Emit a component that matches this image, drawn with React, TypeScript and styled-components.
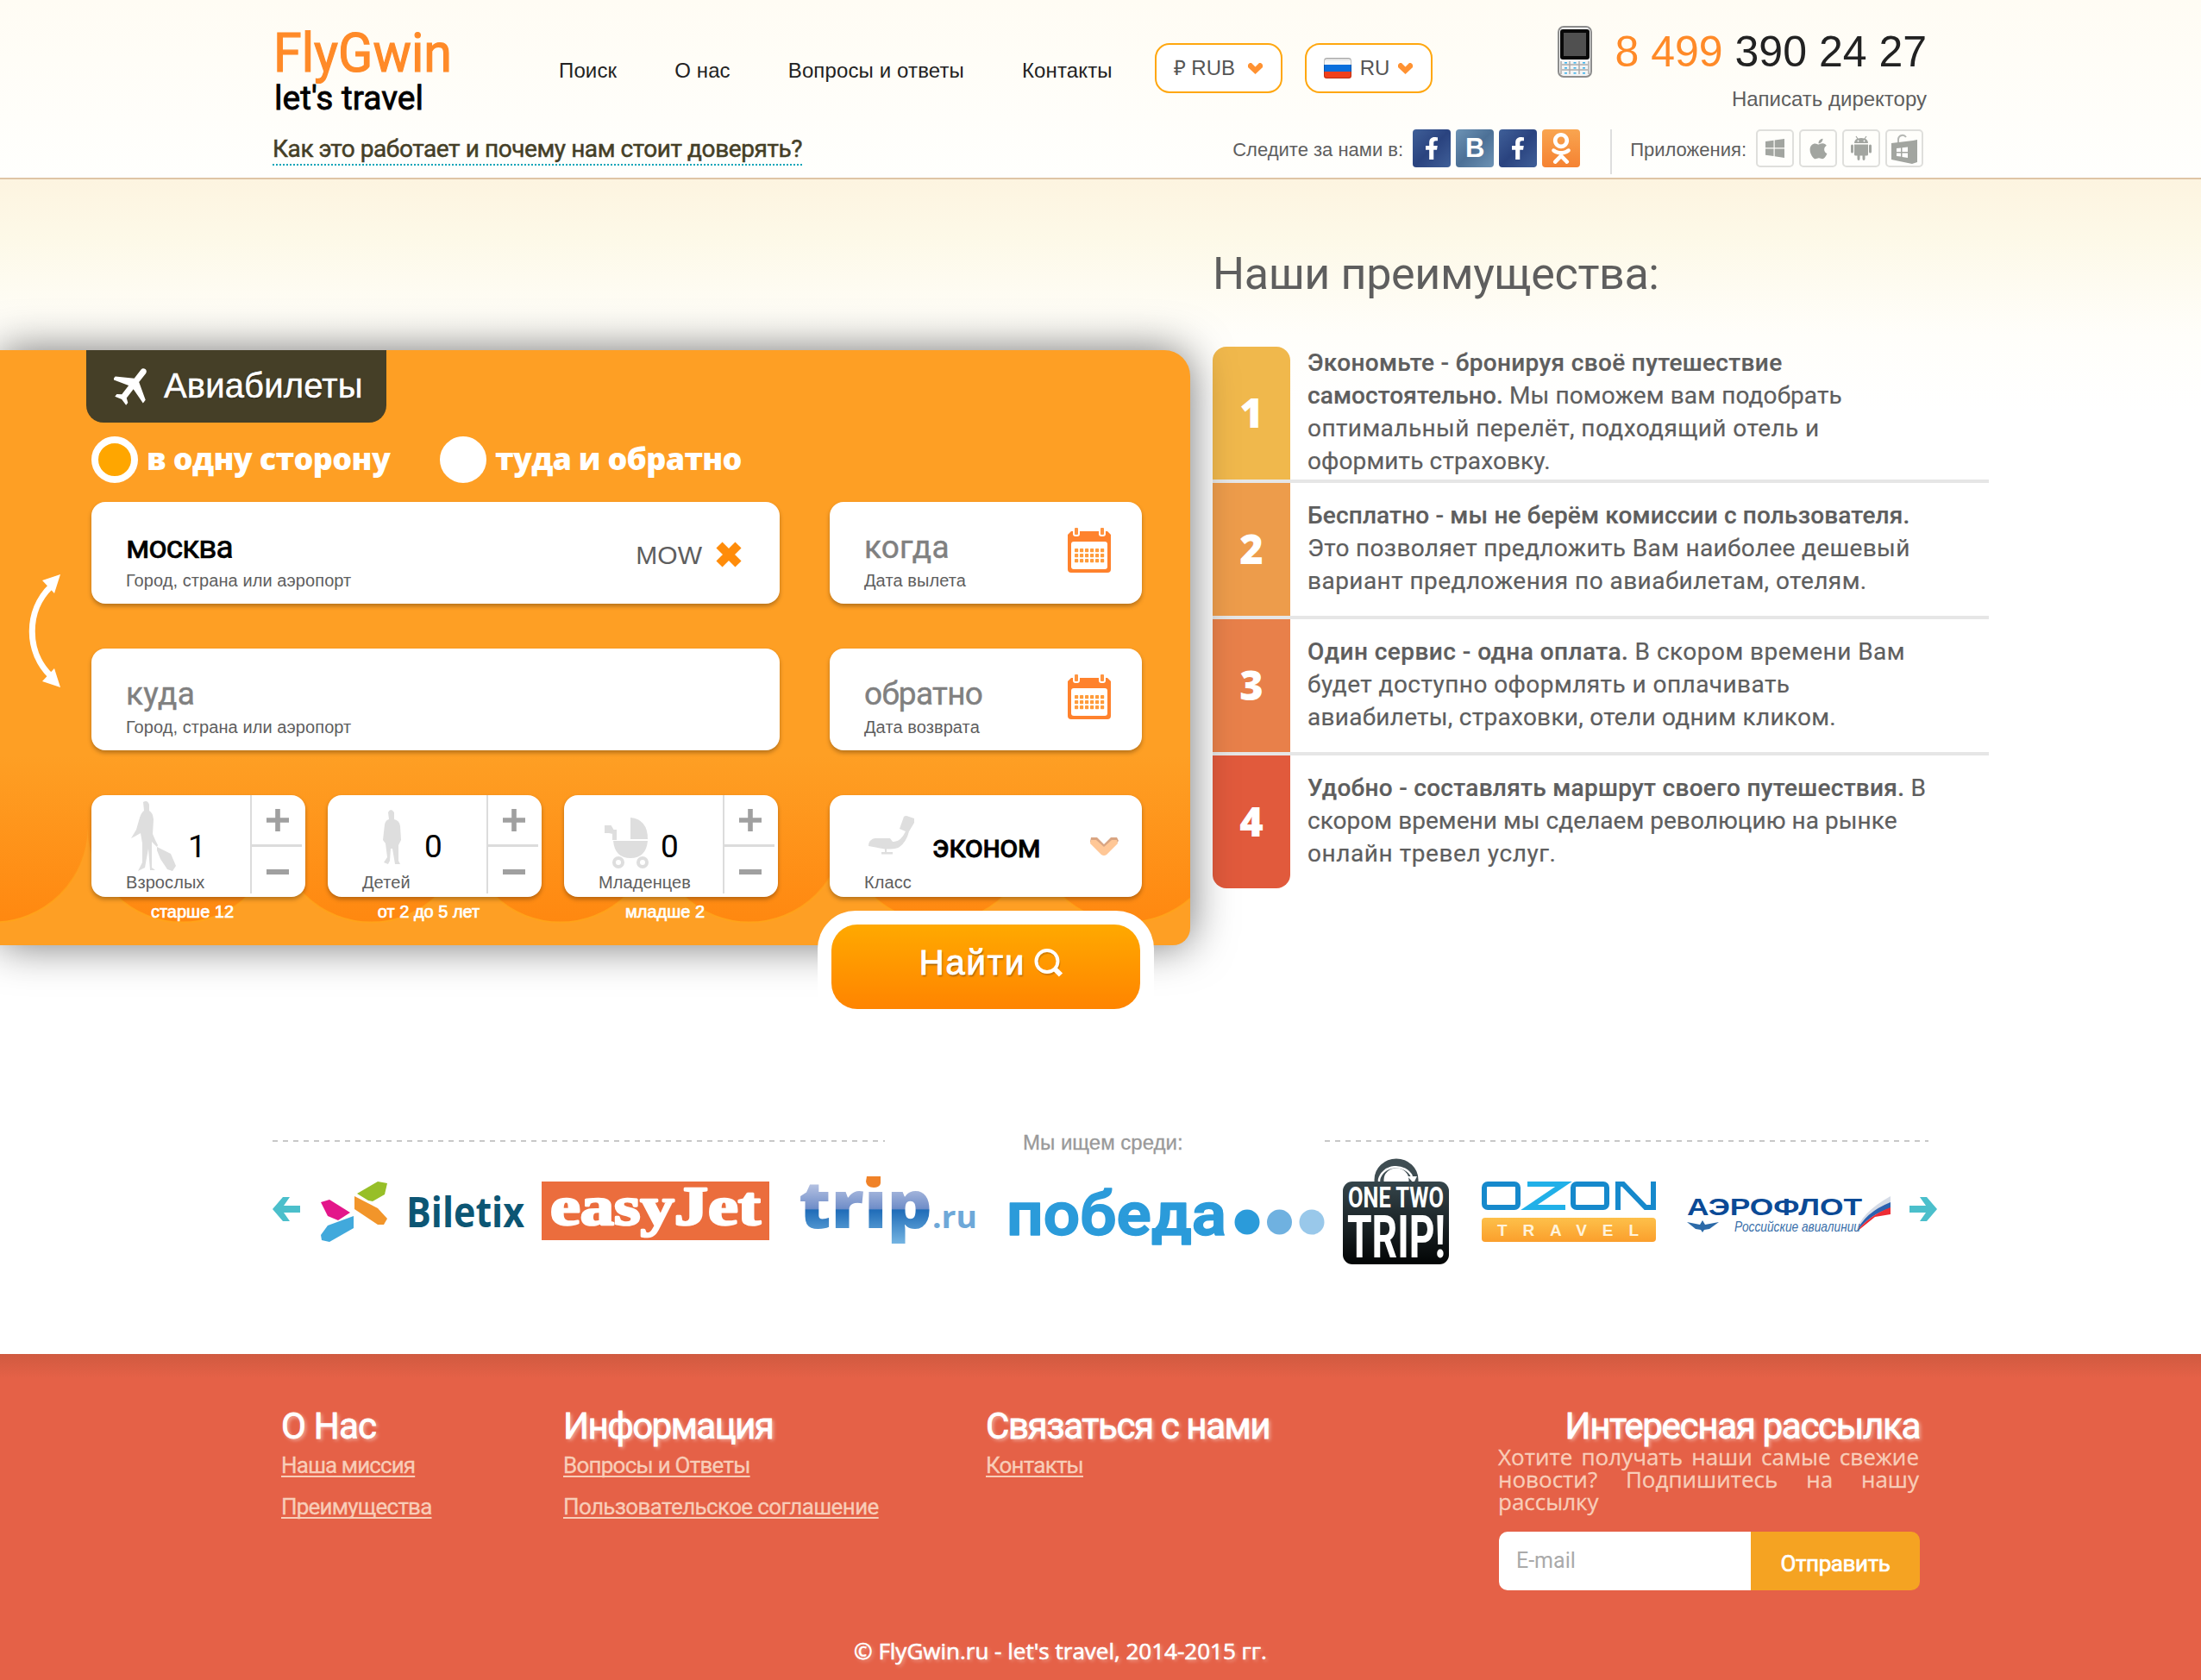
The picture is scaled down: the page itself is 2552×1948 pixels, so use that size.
import React from 'react';
import styled, { createGlobalStyle, css } from 'styled-components';
import { FaFacebookF, FaOdnoklassniki, FaApple } from 'react-icons/fa';

const sans = `'Liberation Sans', Arial, sans-serif`;
const brand = `Roboto, 'Open Sans', sans-serif`;
const human = `'Open Sans', 'Noto Sans', sans-serif`;

type Spacing = { $ls?: number };
const tracking = css<Spacing>`letter-spacing: ${p => p.$ls ?? 0}px;`;

const Global = createGlobalStyle`
  * { box-sizing: border-box; }
  body { margin: 0; background: #fff; font-family: ${sans}; color: #5e5e5e; }
  svg { display: block; flex: none; }
`;

const Page = styled.div`
  width: 2552px;
  height: 1948px;
  overflow: hidden;
  display: flex;
  flex-direction: column;
`;

/* ---------- header ---------- */
const Header = styled.header`
  height: 208px;
  flex: none;
  padding: 0 318px 0 316px;
  border-bottom: 2px solid #dfc5a5;
  background: linear-gradient(#fffcf4, #fffffd);
`;
const TopRow = styled.div`
  display: flex;
  height: 150px;
`;
const LogoBox = styled.a`
  width: 332px;
  padding-top: 20px;
  svg { overflow: visible; }
`;
const Nav = styled.nav`
  display: flex;
  gap: 67px;
  padding-top: 67px;
`;
const NavLink = styled.a`
  font: 24px/30px ${sans};
  letter-spacing: 0.13px;
  color: #222;
  white-space: nowrap;
`;
const Selectors = styled.div`
  display: flex;
  gap: 26px;
  margin: 50px 0 0 49px;
`;
const Selector = styled.button`
  width: 148px;
  height: 58px;
  padding: 0 21px 0 20px;
  display: flex;
  align-items: center;
  gap: 10px;
  border: 2px solid #ffa70f;
  border-radius: 17px;
  background: #fff;
  color: #555;
  font: 24px/30px ${sans};
`;
const SelectorText = styled.span`
  margin-right: auto;
`;
const Contact = styled.div`
  margin-left: auto;
  display: flex;
  align-items: flex-start;
  gap: 27px;
  padding-top: 30px;
`;
const ContactText = styled.div`
  display: flex;
  flex-direction: column;
  align-items: flex-end;
`;
const Phone = styled.div`
  font: 50px/60px ${sans};
  color: #222;
  white-space: pre;
`;
const PhoneCode = styled.span`
  color: #ff8a28;
`;
const Director = styled.a`
  font: 24px/30px ${sans};
  margin-top: 10px;
  color: #5e5e5e;
`;
const BottomRow = styled.div`
  display: flex;
  align-items: flex-start;
  padding-right: 4px;
`;
const TrustLink = styled.a<Spacing>`
  margin: 3px auto 0 0;
  padding-top: 1px;
  height: 39px;
  font: 400 28px/38px ${brand};
  -webkit-text-stroke: 0.5px #453f27;
  color: #453f27;
  border-bottom: 2px dotted #0aa5b8;
  white-space: nowrap;
  ${tracking}
`;
const RowLabel = styled.span<Spacing>`
  font: 22px/30px ${sans};
  color: #5e5e5e;
  padding-top: 9px;
  white-space: nowrap;
  ${tracking}
`;
const IconStrip = styled.div`
  display: flex;
  gap: 6px;
  margin-left: 11px;
`;
const Social = styled.a<{ $bg: string }>`
  width: 44px;
  height: 44px;
  border-radius: 4px;
  display: flex;
  align-items: center;
  justify-content: center;
  background: ${p => p.$bg};
  color: #fff;
  font: bold 31px/44px ${sans};
`;
const AppLink = styled.a`
  width: 44px;
  height: 44px;
  border: 2px solid #dfdfdc;
  border-radius: 5px;
  display: flex;
  align-items: center;
  justify-content: center;
  color: #a2a5a0;
`;
const Divider = styled.i`
  width: 2px;
  height: 52px;
  margin: 0 21px 0 35px;
  background: #dedede;
`;

/* ---------- hero ---------- */
const Hero = styled.main`
  height: 1102px;
  flex: none;
  display: flex;
  background: linear-gradient(#fdf4e0, #fdf9e8 70px, #fffefa 180px, #fff 270px);
`;
const Panel = styled.section`
  position: relative;
  width: 1380px;
  height: 690px;
  margin-top: 198px;
  background: #fe9f24;
  border-radius: 0 30px 20px 0;
  box-shadow: 0 0 50px rgba(0, 0, 0, 0.55);
`;
const Waves = styled.svg`
  position: absolute;
  left: 0;
  top: 470px;
`;
const Form = styled.div`
  position: relative;
  display: flex;
  flex-direction: column;
  align-items: flex-start;
  padding-left: 106px;
`;
const Tab = styled.div`
  width: 348px;
  height: 84px;
  margin-left: -6px;
  padding: 0 0 2px 32px;
  display: flex;
  align-items: center;
  gap: 12px;
  background: #453f27;
  border-radius: 0 0 20px 20px;
  color: #fff;
  font: 40px/50px ${sans};
  letter-spacing: 0.15px;
  -webkit-text-stroke: 0.5px #fff;
  text-shadow: 0 1px 2px rgba(0, 0, 0, 0.6);
`;
const Radios = styled.div`
  display: flex;
  margin: 16px 0 22px;
  height: 54px;
`;
const Radio = styled.label<{ $w: number }>`
  width: ${p => p.$w}px;
  display: flex;
  gap: 10px;
`;
const Dot = styled.span<{ $on?: boolean }>`
  width: 54px;
  height: 54px;
  flex: none;
  border-radius: 50%;
  border: 8px solid #fff;
  background: ${p => (p.$on ? '#ffa600' : '#fff')};
`;
const RadioText = styled.span<Spacing>`
  padding-top: 2px;
  font: 800 36px/48px ${human};
  color: #fff;
  white-space: nowrap;
  ${tracking}
`;
const FormGrid = styled.div`
  display: grid;
  grid-template-columns: 798px 362px;
  gap: 52px 58px;
  align-items: start;
`;
const Card = styled.div`
  height: 118px;
  display: flex;
  background: #fff;
  border-radius: 16px;
  box-shadow: 0 3px 5px rgba(0, 0, 0, 0.28);
`;
const FieldBody = styled.div`
  padding: 30px 0 0 40px;
  margin-right: auto;
`;
const Value = styled.div<Spacing & { $filled?: boolean }>`
  font: 400 37px/46px ${brand};
  color: ${p => (p.$filled ? '#000' : '#808080')};
  -webkit-text-stroke: ${p => (p.$filled ? 0.7 : 0.4)}px currentColor;
  ${tracking}
`;
const Hint = styled.div`
  margin-top: 3px;
  font: 20px/24px ${sans};
  letter-spacing: 0.08px;
  color: #5e5e5e;
  white-space: nowrap;
`;
const Iata = styled.span`
  margin: 44px 16px 0 0;
  font: 30px/36px ${sans};
  color: #5e5e5e;
`;
const ClearBox = styled.span`
  margin: 46px 44px 0 0;
`;
const CalendarBox = styled.span`
  margin: 30px 36px 0 0;
`;
const Passengers = styled.div`
  display: flex;
  gap: 26px;
`;
const Passenger = styled.div`
  width: 248px;
`;
const CounterBody = styled.div`
  width: 184px;
  padding-left: 40px;
`;
const CounterTop = styled.div`
  display: flex;
  height: 89px;
`;
const Figure = styled.span<{ $w: number }>`
  width: ${p => p.$w}px;
  flex: none;
`;
const Count = styled.div<Spacing & { $name?: boolean }>`
  padding-top: 37px;
  font: 400 37px/46px ${brand};
  color: #000;
  -webkit-text-stroke: ${p => (p.$name ? 0.8 : 0)}px #000;
  ${tracking}
`;
const CounterHint = styled(Hint)`
  margin: 0;
`;
const Stepper = styled.div`
  width: 60px;
  height: 114px;
  border-left: 2px solid #dcdcdc;
`;
const Step = styled.button`
  display: flex;
  align-items: center;
  justify-content: center;
  width: 58px;
  height: 57px;
  padding: 0 0 0 1px;
  border: 0;
  background: none;
  & + & {
    border-top: 3px solid #dcdcdc;
    padding: 3px 0 0 1px;
  }
`;
const Age = styled.div`
  padding: 5px 14px 0 0;
  text-align: center;
  font: 20px/24px ${sans};
  color: #fff;
  -webkit-text-stroke: 0.7px #fff;
`;
const ChevronBox = styled.span`
  margin: 48px 27px 0 auto;
`;
const SubmitFrame = styled.div`
  position: absolute;
  left: 948px;
  top: 650px;
  width: 390px;
  height: 130px;
  padding: 16px;
  background: #fff;
  border-radius: 44px 44px 0 0;
`;
const Submit = styled.button`
  width: 358px;
  height: 98px;
  padding: 0 0 10px 13px;
  display: flex;
  align-items: center;
  justify-content: center;
  gap: 10px;
  border: 0;
  border-radius: 30px;
  background: linear-gradient(#ffa900, #ff8400);
  color: #fff;
  font: 40px/50px ${sans};
  letter-spacing: 1.9px;
  -webkit-text-stroke: 1px #fff;
  text-shadow: 1px 2px 2px rgba(90, 50, 0, 0.6);
`;

/* ---------- advantages ---------- */
const Advantages = styled.section`
  margin-left: 26px;
  padding-top: 73px;
  width: 900px;
`;
const AdvTitle = styled.h2<Spacing>`
  margin: 0 0 47px;
  font: 400 52px/74px ${brand};
  color: #5e5e5e;
  white-space: nowrap;
  ${tracking}
`;
const AdvRow = styled.div`
  display: flex;
  height: 154px;
  & + & {
    height: 158px;
    border-top: 4px solid #e6e6e6;
  }
`;
const AdvNumber = styled.div<{ $bg: string }>`
  width: 90px;
  flex: none;
  background: ${p => p.$bg};
  color: #fff;
  text-align: center;
  font: 800 47px/152px ${human};
  ${AdvRow}:first-of-type & { border-radius: 16px 16px 0 0; }
  ${AdvRow}:last-of-type & { border-radius: 0 0 16px 16px; }
`;
const AdvText = styled.div`
  padding: 0 0 2px 20px;
  display: flex;
  flex-direction: column;
  justify-content: center;
`;
const AdvLine = styled.div<Spacing>`
  font: 400 28px/38px ${brand};
  color: #5e5e5e;
  white-space: nowrap;
  -webkit-text-stroke: 0.2px #5e5e5e;
  ${tracking}
`;
const Strong = styled.b`
  font-weight: 500;
`;

/* ---------- partners ---------- */
const Partners = styled.section`
  height: 260px;
  flex: none;
  padding: 0 306px 0 316px;
`;
const PartnersHead = styled.div`
  display: flex;
  height: 34px;
  padding-right: 10px;
`;
const Dashes = styled.i<{ $w: number }>`
  width: ${p => p.$w}px;
  height: 2px;
  margin-top: 12px;
  background: repeating-linear-gradient(90deg, #c8c8c8 0 6px, transparent 6px 12px);
`;
const PartnersTitle = styled.div`
  flex: 1;
  padding-left: 160px;
  font: 24px/30px ${sans};
  color: #999;
  -webkit-text-stroke: 0.3px #999;
`;
const LogoRow = styled.div`
  display: flex;
`;
const Partner = styled.svg<{ $ml?: number }>`
  height: 122px;
  margin-left: ${p => p.$ml ?? 0}px;
  overflow: visible;
`;

/* ---------- footer ---------- */
const Footer = styled.footer`
  flex: 1;
  padding: 59px 326px 0;
  background: linear-gradient(#d05a40, #e56147 28px);
`;
const FooterGrid = styled.div`
  display: grid;
  grid-template-columns: 327px 490px 595px 488px;
  height: 215px;
`;
const FootTitle = styled.h3<Spacing & { $right?: boolean }>`
  margin: 0;
  font: 400 42px/50px ${brand};
  color: #fff;
  -webkit-text-stroke: 0.8px #fff;
  text-shadow: 2px 2px 4px rgba(255, 255, 255, 0.5);
  text-align: ${p => (p.$right ? 'right' : 'left')};
  white-space: nowrap;
  ${tracking}
`;
const FootLink = styled.a<Spacing>`
  display: block;
  margin: 2px 0 12px;
  font: 26px/36px ${brand};
  color: #f8cdb8;
  -webkit-text-stroke: 0.3px #f8cdb8;
  text-decoration: underline;
  text-decoration-thickness: 2px;
  text-underline-offset: 3px;
  text-decoration-skip-ink: none;
  white-space: nowrap;
  ${tracking}
  & + & { margin-top: 0; }
`;
const News = styled.p<Spacing>`
  margin: -3px 1px 22px -1px;
  font: 26px/26px ${human};
  color: #f8cdb8;
  text-align: justify;
  -webkit-text-stroke: 0.3px #f8cdb8;
  ${tracking}
`;
const Subscribe = styled.div`
  display: flex;
  height: 68px;
  border-radius: 10px;
  overflow: hidden;
`;
const Email = styled.div<Spacing>`
  width: 292px;
  padding-left: 20px;
  background: #fff;
  color: #aaa;
  font: 25px/68px ${brand};
  ${tracking}
`;
const Send = styled.button<Spacing>`
  width: 196px;
  border: 0;
  padding: 6px 0 0;
  background: #f5a322;
  color: #fff;
  font: 400 26px/36px ${brand};
  -webkit-text-stroke: 0.7px #fff;
  ${tracking}
`;
const Copy = styled.div<Spacing>`
  margin: 50px 0 0 664px;
  font: 26px/40px ${human};
  color: #fff;
  -webkit-text-stroke: 0.6px #fff;
  text-shadow: 2px 2px 4px rgba(255, 255, 255, 0.4);
  white-space: nowrap;
  ${tracking}
`;

/* ---------- drawings ---------- */
const Heart = () => (
  <svg width="17" height="13" viewBox="0 0 17 13">
    <path d="M4 0 8.500 4.500 13 0H15L17 2V5L8.500 13 0 5V2L2 0Z" fill="#ff9232" />
  </svg>
);

const Flag = () => (
  <svg width="32" height="24" viewBox="0 0 32 24">
    <defs>
      <clipPath id="fl"><rect width="32" height="24" rx="3" /></clipPath>
      <linearGradient id="flw" x2="0" y2="1"><stop offset="0" stopColor="#ccc" /><stop offset=".5" stopColor="#f7f7f7" /></linearGradient>
    </defs>
    <g clipPath="url(#fl)">
      <rect width="32" height="8" fill="url(#flw)" />
      <rect y="8" width="32" height="8" fill="#0b6fdc" />
      <rect y="16" width="32" height="8" fill="#f0401c" />
    </g>
    <rect x=".5" y=".5" width="31" height="23" rx="3" fill="none" stroke="#000" strokeOpacity=".22" />
  </svg>
);

const Mobile = () => (
  <svg width="40" height="61" viewBox="0 0 40 61">
    <rect x="1" y="1" width="38" height="58" rx="6" fill="#f4f4f4" stroke="#8d8d8d" strokeWidth="2" />
    <rect x="3" y="4" width="34" height="35" rx="3" fill="#080808" />
    <rect x="7" y="8" width="26" height="27" fill="#505050" />
    <g stroke="#aaa" strokeWidth="1.500">
      <path d="M5 45H35M5 51H35M14 41V56M25 41V56M4 41V56M36 41V56" />
    </g>
    <g fill="#3cb4ec">
      {[42, 48, 54].map(y => [8, 18.5, 29].map(x => <rect key={x + '-' + y} x={x} y={y} width="3" height="1.600" />))}
    </g>
  </svg>
);

const WindowsIcon = () => (
  <svg width="22" height="22" viewBox="0 0 22 22" fill="#a2a5a0">
    <path d="M0 3 9.500 1.800V10.300H0ZM10.700 1.600 22 0V10.300H10.700ZM0 11.500H9.500V20L0 18.800ZM10.700 11.500H22V22L10.700 20.300Z" />
  </svg>
);

const StoreBag = () => (
  <svg width="34" height="38" viewBox="0 0 34 38">
    <path d="M10 13V8a5 5 0 0 1 9-2" fill="none" stroke="#b5b7b3" strokeWidth="2" />
    <path d="M2 13 27 10 32 9V35L26 37 2 32Z" fill="#a2a5a0" />
    <path d="M8 19 13 18.500V23H8ZM14.500 18.300 21 17.600V23H14.500ZM8 24.500H13V28.500L8 28ZM14.500 24.500H21V30L14.500 29Z" fill="#fff" />
  </svg>
);

const Robot = () => (
  <svg width="26" height="30" viewBox="0 0 26 30" fill="#a2a5a0">
    <path d="M5 9Q5 3 13 3T21 9Z" />
    <path d="M7 1 9 4M19 1 17 4" stroke="#a2a5a0" strokeWidth="1.200" />
    <path d="M5 10.500H21V22Q21 23.500 19.500 23.500H17.500V27Q17.500 29 16 29T14.500 27V23.500H11.500V27Q11.500 29 10 29T8.500 27V23.500H6.500Q5 23.500 5 22Z" />
    <rect x="1" y="10.500" width="3" height="10" rx="1.500" />
    <rect x="22" y="10.500" width="3" height="10" rx="1.500" />
    <circle cx="9.500" cy="6.500" r=".9" fill="#fff" /><circle cx="16.500" cy="6.500" r=".9" fill="#fff" />
  </svg>
);

const PlaneIcon = () => (
  <svg width="46" height="46" viewBox="0 0 24 24">
    <path transform="rotate(38 12 12) translate(-2.600 -2.600) scale(1.220)" fill="#fff"
      d="M21 16v-2l-8-5V3.500c0-.83-.67-1.500-1.500-1.500S10 2.670 10 3.500V9l-8 5v2l8-2.500V19l-2 1.500V22l3.500-1 3.500 1v-1.500L13 19v-5.500l8 2.500z" />
  </svg>
);

const SwapSvg = styled.svg`
  position: absolute;
  left: 32px;
  top: 260px;
`;
const Swap = () => (
  <SwapSvg width="40" height="132" viewBox="0 0 40 132">
    <path d="M27 14C-2 42-2 90 27 118" fill="none" stroke="#fff" strokeWidth="7" />
    <path d="M38 0 17 7 31 22ZM38 131 17 124 31 109Z" fill="#fff" />
  </SwapSvg>
);

const Calendar = () => (
  <svg width="50" height="52" viewBox="0 0 50 52">
    <path d="M4 4H46L50 8V48Q50 52 46 52H4Q0 52 0 48V8Z" fill="#ff822d" />
    <rect x="4" y="16" width="42" height="32" rx="3" fill="#fff" />
    <rect x="6" y="-2" width="8" height="12" rx="3" fill="#fff" />
    <rect x="36" y="-2" width="8" height="12" rx="3" fill="#fff" />
    <rect x="8" width="4" height="8" rx="1" fill="#ff9440" />
    <rect x="38" width="4" height="8" rx="1" fill="#ff9440" />
    <g fill="#ff9c3c">
      {[24, 30, 36].map(y => [8, 14, 20, 26, 32, 38].map(x => <rect key={x + '-' + y} x={x} y={y} width="4.200" height="4.200" rx=".8" />))}
    </g>
  </svg>
);

const Adult = () => (
  <svg width="60" height="88" viewBox="0 0 60 88" fill="#dedede">
    <path d="M20 8Q25 5 27 11L27 18Q31 20 32 28L31 45 34 52 37 58 36 60 30 54 30 84 34 87 28 87 26 62 22 84 14 88 19 78 19 56 17 44 10 48 6 50 12 40 16 26Q18 20 21 18Z" />
    <path d="M36 60 42 63 52 68 58 82 54 88 48 86 40 74 36 64Z" />
  </svg>
);
const Child = () => (
  <svg width="60" height="88" viewBox="0 0 60 88" fill="#dedede">
    <path d="M30 20Q33 14 37 20L37 28Q43 29 44 36L45 52 42 58 42 76 44 80 38 80 35 62 33 62 32 76 30 80 25 78 29 72 27 56 24 52 26 34Q27 29 31 28Z" />
  </svg>
);
const Stroller = () => (
  <svg width="60" height="88" viewBox="0 0 60 88">
    <g fill="#dedede">
      <path d="M37 32Q57 34 57 57H37Z" transform="translate(0 -6)" />
      <path d="M17 54H57Q55 74 37 74 19 74 17 54Z" transform="translate(0 -1)" />
      <path d="M8 36H14L17 41H20V51H17V44L12 43H8Z" stroke="#dedede" strokeWidth="2" />
    </g>
    <g fill="none" stroke="#dedede" strokeWidth="4"><circle cx="23" cy="78" r="5" /><circle cx="51" cy="78" r="5" /></g>
  </svg>
);
const Seat = () => (
  <svg width="62" height="88" viewBox="0 0 62 88" fill="#dedede">
    <path d="M46 25Q48 23 52 25L58 27 58 32 52 42Q49 54 41 60 38 62 30 62.500H26V66H33V68.500H20V66H24V62.500L5 59Q5 54 8 52 10 50 13 50H30L33 54Q42 55 48 42L41 39Z" />
  </svg>
);

const Plus = () => (
  <svg width="26" height="26" viewBox="0 0 26 26"><path d="M10.200 0H15.800V10.200H26V15.800H15.800V26H10.200V15.800H0V10.200H10.200Z" fill="#a0a0a0" /></svg>
);
const Minus = () => (
  <svg width="26" height="6" viewBox="0 0 26 6"><rect width="26" height="6" fill="#a0a0a0" /></svg>
);

const Chevron = () => (
  <svg width="34" height="23" viewBox="0 0 34 23">
    <path d="M2 1H9L17 9 25 1H32L34 5 20 20Q17 22 14 20L1 6Z" fill="#d9a582" />
    <path d="M2 4 8 4 17 12 26 4 32 4 33 8 20 21Q17 23 14 21L1 8Z" fill="#ffc796" />
  </svg>
);

const Lens = () => (
  <svg width="34" height="34" viewBox="0 0 34 34">
    <g transform="translate(0 1.500)">
      <circle cx="16" cy="16" r="12.500" fill="none" stroke="#9c5a00" strokeOpacity=".4" strokeWidth="4" />
      <circle cx="15" cy="14" r="12.500" fill="none" stroke="#fff" strokeWidth="4" />
      <path d="M23.500 22.500 31 30" stroke="#fff" strokeWidth="6" />
    </g>
  </svg>
);

const PanelWaves = () => {
  const r = 109.6;
  const first = -117.6;
  const arcs = Array.from({ length: 7 }, (_, i) => `A${r} ${r} 0 0 0 ${first + (i + 1) * 2 * r} 84`).join('');
  return (
    <Waves width="1380" height="200" viewBox="0 0 1380 200">
      <defs>
        <linearGradient id="wv" gradientUnits="userSpaceOnUse" x1="0" y1="0" x2="0" y2="194">
          <stop offset="0" stopColor="#fe9f24" /><stop offset="1" stopColor="#ff8810" />
        </linearGradient>
        <linearGradient id="ws" gradientUnits="userSpaceOnUse" x1="0" y1="90" x2="0" y2="194">
          <stop offset="0" stopColor="#ffa41c" stopOpacity="0" /><stop offset="1" stopColor="#ffa31a" />
        </linearGradient>
      </defs>
      <path d={`M${first} 0V84${arcs}V0Z`} fill="url(#wv)" />
      <path d={`M${first} 84${arcs}`} fill="none" stroke="url(#ws)" strokeWidth="2" />
    </Waves>
  );
};

const PrevArrow = () => (
  <Partner width={32} viewBox="0 0 32 122"><path d="M0 58 12 44H20L13 54H32V62H13L20 72H12Z" fill="#4bbfcb" /></Partner>
);
const NextArrow = () => (
  <Partner $ml={22} width={32} viewBox="0 0 32 122"><path d="M32 58 20 44H12L19 54H0V62H19L12 72H20Z" fill="#4bbfcb" /></Partner>
);

const Biletix = () => (
  <Partner $ml={24} width={236} viewBox="0 0 236 122">
    <path d="M42 41 66 27 77 29 74 42 60 50 55 49Z" fill="#97bf28" transform="translate(0 -1)" />
    <path d="M39 43 66 57 77 69 73 76 66 76 39 58Z" fill="#f2952a" />
    <path d="M0 50 10 47 34 62 20 71 8 66Z" fill="#e3168a" />
    <path d="M38 66V80L10 96 1 94 0 88 8 77Z" fill="#41a9dc" />
    <text x="99" y="79" fontFamily={human} fontWeight="700" fontSize="48" fill="#0c5674" textLength="137" lengthAdjust="spacingAndGlyphs">Biletix</text>
  </Partner>
);
const EasyJet = () => (
  <Partner $ml={20} width={264} viewBox="0 0 264 122">
    <rect y="26" width="264" height="68" fill="#eb6d3d" />
    <text x="10" y="76" fontFamily="'Liberation Serif', serif" fontWeight="bold" fontSize="63" fill="#fff" stroke="#fff" strokeWidth="2.600" strokeLinejoin="round" textLength="244" lengthAdjust="spacingAndGlyphs">easyJet</text>
  </Partner>
);
const Trip = () => (
  <Partner $ml={36} width={204} viewBox="0 0 204 122">
    <defs>
      <linearGradient id="tr" gradientUnits="userSpaceOnUse" x1="0" y1="20" x2="0" y2="98">
        <stop offset="0" stopColor="#ccd3ea" /><stop offset=".48" stopColor="#6f8dc8" /><stop offset=".5" stopColor="#1f6cb8" /><stop offset="1" stopColor="#74b4e2" />
      </linearGradient>
    </defs>
    <text x="-2" y="80" fontFamily={human} fontWeight="800" fontSize="76" fill="url(#tr)" textLength="155" lengthAdjust="spacingAndGlyphs">trıp</text>
    <path d="M77 20H93V28Q92 33 85 33 77 33 76 26Z" fill="#f08228" />
    <text x="153" y="80" fontFamily={human} fontWeight="700" fontSize="35" fill="#6ea8d8" textLength="52" lengthAdjust="spacingAndGlyphs">.ru</text>
  </Partner>
);
const Pobeda = () => (
  <Partner $ml={38} width={366} viewBox="0 0 366 122">
    <text x="-3" y="88" fontFamily={brand} fontWeight="600" fontSize="71" fill="#2b9bda" stroke="#2b9bda" strokeWidth="1.500" strokeLinejoin="round" textLength="255" lengthAdjust="spacingAndGlyphs">победа</text>
    <circle cx="276" cy="73" r="14.500" fill="#2b9bda" />
    <circle cx="313.500" cy="73" r="14.500" fill="#6fb1e0" />
    <circle cx="351" cy="73" r="14.500" fill="#99c8ea" />
  </Partner>
);
const OneTwoTrip = () => (
  <Partner $ml={21} width={123} viewBox="0 0 123 122">
    <defs><linearGradient id="ot" x2="0" y2="1"><stop offset="0" stopColor="#35454b" /><stop offset="1" stopColor="#020404" /></linearGradient></defs>
    <path d="M42 30V24A20 19 0 0 1 82 24V30" fill="none" stroke="#3f4d52" strokeWidth="11" />
    <path d="M42 27V24A20 18 0 0 1 80 20" fill="none" stroke="#fff" strokeWidth="2.500" />
    <path d="M75 20H86L82 28Z" fill="#fff" />
    <rect y="26" width="123" height="96" rx="11" fill="url(#ot)" />
    <g fontFamily={brand} fontWeight="700" fill="#fff">
      <text x="6" y="56" fontSize="33" textLength="111" lengthAdjust="spacingAndGlyphs">ONE TWO</text>
      <text x="5" y="114" fontSize="68" textLength="114" lengthAdjust="spacingAndGlyphs">TRIP!</text>
    </g>
  </Partner>
);
const Ozon = () => (
  <Partner $ml={38} width={202} viewBox="0 0 202 122">
    <defs><linearGradient id="oz" x2="0" y2="1"><stop offset="0" stopColor="#fdc04a" /><stop offset="1" stopColor="#fb9f2c" /></linearGradient></defs>
    <g fill="none" stroke="#1689cc" strokeWidth="6">
      <rect x="3" y="29" width="39" height="27" rx="4" />
      <path d="M53 29H95L55 56H97" stroke="#21b0e8" />
      <rect x="106" y="29" width="39" height="27" rx="4" />
      <path d="M158 59V29H164L190 56H199V26" />
    </g>
    <rect y="68" width="202" height="28" rx="4" fill="url(#oz)" />
    <text x="18" y="88.500" fontFamily={sans} fontWeight="bold" fontSize="19" fill="#fff3dc" textLength="164">TRAVEL</text>
  </Partner>
);
const Aeroflot = () => (
  <Partner $ml={36} width={236} viewBox="0 0 236 122">
    <text x="0" y="64.500" fontFamily={sans} fontWeight="bold" fontSize="27" fill="#0b4a96" textLength="203" lengthAdjust="spacingAndGlyphs">АЭРОФЛОТ</text>
    <path d="M196 84Q202 62 236 43V51Q210 62 196 84Z" fill="#d5dbe6" />
    <path d="M197 84Q206 62 236 50V57Q212 64 197 84Z" fill="#2d62b0" />
    <path d="M197 84Q210 66 236 56V64L218 67Z" fill="#ee2b34" />
    <path d="M0 73 15 76 18 71 21 76 37 73 26 81 20 82 18 85 16 82 10 81Z" fill="#2c6aa8" />
    <text x="55" y="84" fontFamily={sans} fontStyle="italic" fontSize="17" fill="#3a70aa" textLength="146" lengthAdjust="spacingAndGlyphs">Российские авиалинии</text>
  </Partner>
);

/* ---------- data ---------- */
const counters = [
  { icon: <Adult />, n: '1', label: 'Взрослых', age: 'старше 12' },
  { icon: <Child />, n: '0', label: 'Детей', age: 'от 2 до 5 лет' },
  { icon: <Stroller />, n: '0', label: 'Младенцев', age: 'младше 2' },
];

const advantages = [
  { bg: '#f0b84c', lines: [
    { b: 'Экономьте - бронируя своё путешествие', ls: 0.34 },
    { b: 'самостоятельно.', t: ' Мы поможем вам подобрать', ls: 0.12 },
    { t: 'оптимальный перелёт, подходящий отель и', ls: 0.42 },
    { t: 'оформить страховку.', ls: 0.12 } ] },
  { bg: '#ed9c4b', lines: [
    { b: 'Бесплатно - мы не берём комиссии с пользователя.', ls: 0.17 },
    { t: 'Это позволяет предложить Вам наиболее дешевый', ls: 0.34 },
    { t: 'вариант предложения по авиабилетам, отелям.', ls: 0.45 } ] },
  { bg: '#e8804a', lines: [
    { b: 'Один сервис - одна оплата.', t: ' В скором времени Вам', ls: 0.46 },
    { t: 'будет доступно оформлять и оплачивать', ls: 0.44 },
    { t: 'авиабилеты, страховки, отели одним кликом.', ls: 0.27 } ] },
  { bg: '#e15a3c', lines: [
    { b: 'Удобно - составлять маршрут своего путешествия.', t: ' В', ls: 0.3 },
    { t: 'скором времени мы сделаем революцию на рынке', ls: 0.04 },
    { t: 'онлайн тревел услуг.', ls: 0.57 } ] },
] as { bg: string; lines: { b?: string; t?: string; ls: number }[] }[];

const DateField = ({ value, hint, ls = 0 }: { value: string; hint: string; ls?: number }) => (
  <Card>
    <FieldBody><Value $ls={ls}>{value}</Value><Hint>{hint}</Hint></FieldBody>
    <CalendarBox><Calendar /></CalendarBox>
  </Card>
);

export default function App() {
  return (
    <Page>
      <Global />
      <Header>
        <TopRow>
          <LogoBox>
            <svg width="220" height="120" viewBox="0 -8 220 120">
              <text x="1" y="55" fontFamily={brand} fontSize="63" fill="#ff8a28" stroke="#ff8a28" strokeWidth="1.200" textLength="207" lengthAdjust="spacingAndGlyphs">FlyGwin</text>
              <text x="2" y="98.500" fontFamily={brand} fontSize="39" fill="#000" stroke="#000" strokeWidth=".8" textLength="173" lengthAdjust="spacingAndGlyphs">let's travel</text>
            </svg>
          </LogoBox>
          <Nav>
            <NavLink>Поиск</NavLink>
            <NavLink>О нас</NavLink>
            <NavLink>Вопросы и ответы</NavLink>
            <NavLink>Контакты</NavLink>
          </Nav>
          <Selectors>
            <Selector><SelectorText>₽ RUB</SelectorText><Heart /></Selector>
            <Selector><Flag /><SelectorText>RU</SelectorText><Heart /></Selector>
          </Selectors>
          <Contact>
            <Mobile />
            <ContactText>
              <Phone><PhoneCode>8 499</PhoneCode> 390 24 27</Phone>
              <Director>Написать директору</Director>
            </ContactText>
          </Contact>
        </TopRow>
        <BottomRow>
          <TrustLink $ls={-0.42}>Как это работает и почему нам стоит доверять?</TrustLink>
          <RowLabel>Следите за нами в:</RowLabel>
          <IconStrip>
            <Social $bg="linear-gradient(135deg,#3f5f98,#2a437f 50%,#3f5f98)"><FaFacebookF size={26} /></Social>
            <Social $bg="linear-gradient(135deg,#6d93b5,#4c7096 50%,#6d93b5)">B</Social>
            <Social $bg="linear-gradient(135deg,#3f5f98,#2a437f 50%,#3f5f98)"><FaFacebookF size={26} /></Social>
            <Social $bg="linear-gradient(#f9a550,#f58232)"><FaOdnoklassniki size={36} /></Social>
          </IconStrip>
          <Divider />
          <RowLabel>Приложения:</RowLabel>
          <IconStrip>
            <AppLink><WindowsIcon /></AppLink>
            <AppLink><FaApple size={27} /></AppLink>
            <AppLink><Robot /></AppLink>
            <AppLink><StoreBag /></AppLink>
          </IconStrip>
        </BottomRow>
      </Header>

      <Hero>
        <Panel>
          <PanelWaves />
          <Swap />
          <Form>
            <Tab><PlaneIcon />Авиабилеты</Tab>
            <Radios>
              <Radio $w={404}><Dot $on /><RadioText $ls={-0.65}>в одну сторону</RadioText></Radio>
              <Radio $w={404}><Dot /><RadioText $ls={-0.75}>туда и обратно</RadioText></Radio>
            </Radios>
            <FormGrid>
              <Card>
                <FieldBody><Value $filled $ls={-0.9}>москва</Value><Hint>Город, страна или аэропорт</Hint></FieldBody>
                <Iata>MOW</Iata>
                <ClearBox>
                  <svg width="30" height="30" viewBox="0 0 30 30"><path d="M4 4 26 26M26 4 4 26" stroke="#ff8c0a" strokeWidth="10" /></svg>
                </ClearBox>
              </Card>
              <DateField value="когда" hint="Дата вылета" ls={0.2} />
              <Card><FieldBody><Value $ls={0.3}>куда</Value><Hint>Город, страна или аэропорт</Hint></FieldBody></Card>
              <DateField value="обратно" hint="Дата возврата" ls={-0.7} />
              <Passengers>
                {counters.map(c => (
                  <Passenger key={c.label}>
                    <Card>
                      <CounterBody>
                        <CounterTop><Figure $w={72}>{c.icon}</Figure><Count>{c.n}</Count></CounterTop>
                        <CounterHint>{c.label}</CounterHint>
                      </CounterBody>
                      <Stepper><Step><Plus /></Step><Step><Minus /></Step></Stepper>
                    </Card>
                    <Age>{c.age}</Age>
                  </Passenger>
                ))}
              </Passengers>
              <Card>
                <CounterBody>
                  <CounterTop><Figure $w={79}><Seat /></Figure><Count $name $ls={-0.9}>эконом</Count></CounterTop>
                  <CounterHint>Класс</CounterHint>
                </CounterBody>
                <ChevronBox><Chevron /></ChevronBox>
              </Card>
            </FormGrid>
          </Form>
          <SubmitFrame><Submit>Найти<Lens /></Submit></SubmitFrame>
        </Panel>

        <Advantages>
          <AdvTitle $ls={-0.36}>Наши преимущества:</AdvTitle>
          <div>
            {advantages.map((a, i) => (
              <AdvRow key={a.bg}>
                <AdvNumber $bg={a.bg}>{i + 1}</AdvNumber>
                <AdvText>
                  {a.lines.map((l, j) => (
                    <AdvLine key={j} $ls={l.ls}>{l.b && <Strong>{l.b}</Strong>}{l.t}</AdvLine>
                  ))}
                </AdvText>
              </AdvRow>
            ))}
          </div>
        </Advantages>
      </Hero>

      <Partners>
        <PartnersHead>
          <Dashes $w={710} />
          <PartnersTitle>Мы ищем среди:</PartnersTitle>
          <Dashes $w={700} />
        </PartnersHead>
        <LogoRow>
          <PrevArrow />
          <Biletix />
          <EasyJet />
          <Trip />
          <Pobeda />
          <OneTwoTrip />
          <Ozon />
          <Aeroflot />
          <NextArrow />
        </LogoRow>
      </Partners>

      <Footer>
        <FooterGrid>
          <div>
            <FootTitle $ls={-0.8}>О Нас</FootTitle>
            <FootLink $ls={-0.9}>Наша миссия</FootLink>
            <FootLink $ls={-0.8}>Преимущества</FootLink>
          </div>
          <div>
            <FootTitle $ls={-1.5}>Информация</FootTitle>
            <FootLink $ls={-0.76}>Вопросы и Ответы</FootLink>
            <FootLink $ls={-0.63}>Пользовательское соглашение</FootLink>
          </div>
          <div>
            <FootTitle $ls={-1.4}>Связаться с нами</FootTitle>
            <FootLink $ls={-0.8}>Контакты</FootLink>
          </div>
          <div>
            <FootTitle $right $ls={-1.3}>Интересная рассылка</FootTitle>
            <News>Хотите получать наши самые свежие новости? Подпишитесь на нашу рассылку</News>
            <Subscribe><Email>E-mail</Email><Send $ls={-0.4}>Отправить</Send></Subscribe>
          </div>
        </FooterGrid>
        <Copy>© FlyGwin.ru - let's travel, 2014-2015 гг.</Copy>
      </Footer>
    </Page>
  );
}
